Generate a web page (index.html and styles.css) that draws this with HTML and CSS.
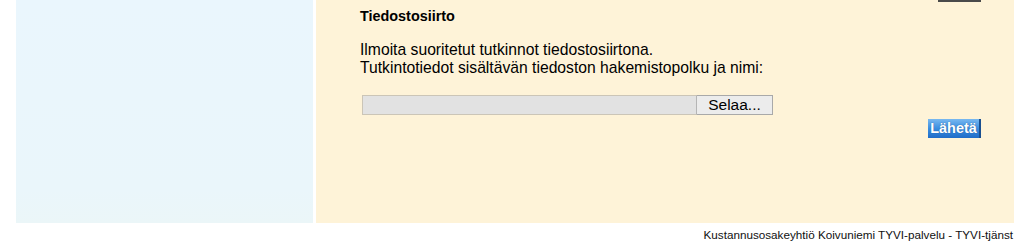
FILE: index.html
```html
<!DOCTYPE html>
<html lang="fi">
<head>
<meta charset="utf-8">
<title>Tiedostosiirto</title>
<link rel="stylesheet" href="styles.css">
</head>
<body>
<div class="page">
  <div class="cols">
    <aside class="side"></aside>
    <main class="main">
      <div class="prev-btn"></div>
      <h2 class="title">Tiedostosiirto</h2>
      <p class="intro">Ilmoita suoritetut tutkinnot tiedostosiirtona.<br>Tutkintotiedot sisältävän tiedoston hakemistopolku ja nimi:</p>
      <div class="file">
        <span class="file-field"></span>
        <span class="file-btn">Selaa...</span>
      </div>
      <div class="actions"><span class="send">Lähetä</span></div>
    </main>
  </div>
  <footer class="foot">Kustannusosakeyhtiö Koivuniemi TYVI-palvelu - TYVI-tjänst</footer>
</div>
</body>
</html>
```
FILE: styles.css
```css
html, body { margin: 0; padding: 0; background: #fff; }
body { font-family: "Liberation Sans", Arial, sans-serif; color: #000; }
.page { width: 1024px; height: 251px; overflow: hidden; }
.cols { display: flex; gap: 3px; padding-left: 16px; height: 223px; }
.side { width: 297px; background: linear-gradient(#eaf6fd, #eaf6fb 85%, #ebf6f8); }
.main { width: 698px; background: #fef3d8; position: relative; padding-left: 44px; box-sizing: border-box; }
.prev-btn { position: absolute; top: 0; left: 622px; width: 43px; height: 2px; background: #4a4a4a; }
.title { margin: 0; padding-top: 8px; font-size: 14.4px; font-weight: bold; line-height: 17px; }
.intro { margin: 16px 0 0; font-size: 15.7px; line-height: 18px; }
.file { display: flex; margin: 18px 0 0 2px; height: 20px; }
.file-field { width: 333px; background: #e2e2e2; border: 1px solid #cbc5b7; border-right: 1px solid #b5b5b5; }
.file-btn { width: 75px; background: #ececec; border: 1px solid #a9a9a9; border-left: 0; font-size: 15.5px; line-height: 18px; text-align: center; }
.actions { display: flex; justify-content: flex-end; padding-right: 33px; margin-top: 4px; }
.send { display: inline-block; width: 51px; height: 19px; background: linear-gradient(#78b8f0, #3a8ee0 50%, #1f6cc8); border-right: 2px solid #1a4f90; color: #fff; font-weight: bold; font-size: 14.5px; line-height: 19px; text-align: center; text-shadow: 0 0 1px #1a4f90; }
.foot { text-align: right; font-size: 11.7px; line-height: 14px; padding: 5px 11px 0 0; color: #111; }
```
